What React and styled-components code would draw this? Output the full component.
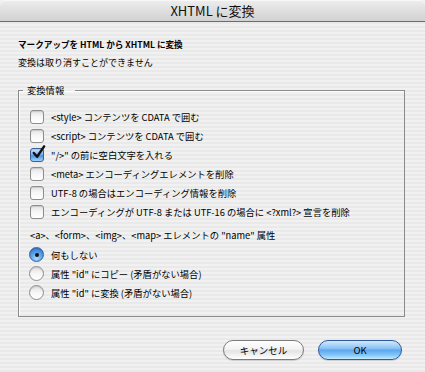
import React from "react";
import styled, { createGlobalStyle } from "styled-components";

const GlobalStyle = createGlobalStyle`
  html, body {
    margin: 0;
    padding: 0;
  }
  body {
    font-family: "Noto Sans CJK JP", "DejaVu Sans", sans-serif;
    font-size: 9.3px;
    color: #000;
    text-autospace: no-autospace;
  }
`;

const checks = [
  { label: "<style> コンテンツを CDATA で囲む", checked: false },
  { label: "<script> コンテンツを CDATA で囲む", checked: false },
  { label: "\"/>\" の前に空白文字を入れる", checked: true },
  { label: "<meta> エンコーディングエレメントを削除", checked: false },
  { label: "UTF-8 の場合はエンコーディング情報を削除", checked: false },
  {
    label: "エンコーディングが UTF-8 または UTF-16 の場合に <?xml?> 宣言を削除",
    checked: false,
  },
];

const radios = [
  { label: "何もしない", selected: true },
  { label: "属性 \"id\" にコピー (矛盾がない場合)", selected: false },
  { label: "属性 \"id\" に変換 (矛盾がない場合)", selected: false },
];

export default function App() {
  return (
    <>
      <GlobalStyle />
      <S.Window>
        <S.TitleBar>XHTML に変換</S.TitleBar>
        <S.Body>
          <S.Heading>マークアップを HTML から XHTML に変換</S.Heading>
          <S.Note>変換は取り消すことができません</S.Note>

          <S.Group>
            <S.Legend>変換情報</S.Legend>
            <S.GroupInner>
              {checks.map((c) => (
                <S.Row key={c.label}>
                  <Checkbox checked={c.checked} />
                  <span>{c.label}</span>
                </S.Row>
              ))}

              <S.SubLabel>
                &lt;a&gt;、&lt;form&gt;、&lt;img&gt;、&lt;map&gt; エレメントの "name" 属性
              </S.SubLabel>

              {radios.map((r) => (
                <S.Row key={r.label}>
                  <S.Radio $selected={r.selected} />
                  <span>{r.label}</span>
                </S.Row>
              ))}
            </S.GroupInner>
          </S.Group>

          <S.Buttons>
            <S.Button>キャンセル</S.Button>
            <S.Button $primary>OK</S.Button>
          </S.Buttons>
        </S.Body>
      </S.Window>
    </>
  );
}

const Checkbox = ({ checked }) => (
  <S.Box $checked={checked}>
    {checked && (
      <S.Tick viewBox="0 0 16 16">
        <path
          d="M3 8.5 L6.5 12.5 L14 1.5"
          fill="none"
          stroke="#111"
          strokeWidth="2.6"
          strokeLinecap="round"
          strokeLinejoin="round"
        />
      </S.Tick>
    )}
  </S.Box>
);

const S = {
  Window: styled.div`
    width: 425px;
    height: 372px;
    display: flex;
    flex-direction: column;
    overflow: hidden;
    background: repeating-linear-gradient(
      to bottom,
      #f1f1f1 0px,
      #f1f1f1 2px,
      #e9e9e9 2px,
      #e9e9e9 4px
    );
  `,
  TitleBar: styled.div`
    height: 21px;
    flex: none;
    display: flex;
    align-items: center;
    justify-content: center;
    font-size: 13px;
    color: #111;
    border-top-left-radius: 5px;
    border-top-right-radius: 5px;
    border-bottom: 1px solid #6c6c6c;
    background: linear-gradient(to bottom, #eeeeee 0%, #e0e0e0 45%, #d2d2d2 100%);
    box-shadow: inset 0 1px 0 #f8f8f8;
  `,
  Body: styled.div`
    display: flex;
    flex-direction: column;
    padding: 15px 20px 0 18px;
  `,
  Heading: styled.div`
    font-size: 8.6px;
    font-weight: bold;
    line-height: 14px;
  `,
  Note: styled.div`
    font-size: 9px;
    line-height: 14px;
    margin-top: 5px;
  `,
  Group: styled.fieldset`
    margin: 13px 0 0 0;
    padding: 0;
    border: 1px solid #8a8a8a;
    box-shadow: inset 1px 1px 0 #fdfdfd;
    min-width: 0;
  `,
  Legend: styled.legend`
    margin-left: 4px;
    padding: 0 11px 0 4px;
    line-height: 14px;
  `,
  GroupInner: styled.div`
    display: flex;
    flex-direction: column;
    padding: 10px 0 14px 11px;
  `,
  Row: styled.div`
    display: flex;
    align-items: center;
    gap: 7px;
    height: 19px;
    white-space: nowrap;
  `,
  SubLabel: styled.div`
    height: 19px;
    line-height: 19px;
    margin-top: 5px;
  `,
  Box: styled.span`
    position: relative;
    flex: none;
    width: 12px;
    height: 12px;
    border-radius: 3px;
    border: 1px solid ${(p) => (p.$checked ? "#3a5f97" : "#8d8d8d")};
    background: ${(p) =>
      p.$checked
        ? "linear-gradient(to bottom, #cfe6fb 0%, #7fb7ee 45%, #4a93e2 55%, #9fd3fb 100%)"
        : "linear-gradient(to bottom, #e2e2e2 0%, #f6f6f6 45%, #ffffff 100%)"};
    box-shadow: inset 0 1px 1px rgba(0, 0, 0, 0.12);
  `,
  Tick: styled.svg`
    position: absolute;
    left: 0px;
    top: -4px;
    width: 15px;
    height: 15px;
  `,
  Radio: styled.span`
    position: relative;
    flex: none;
    width: 13px;
    height: 13px;
    border-radius: 50%;
    border: 1px solid ${(p) => (p.$selected ? "#3a5f97" : "#8d8d8d")};
    background: ${(p) =>
      p.$selected
        ? "radial-gradient(circle at 50% 80%, #a9dcff 0%, #5aa2ea 45%, #2f6fcf 100%)"
        : "linear-gradient(to bottom, #e0e0e0 0%, #f6f6f6 50%, #ffffff 100%)"};
    box-shadow: inset 0 1px 1px rgba(0, 0, 0, 0.12);
    margin-left: -1px;

    &::after {
      content: "";
      display: ${(p) => (p.$selected ? "block" : "none")};
      position: absolute;
      left: 4.5px;
      top: 4.5px;
      width: 4px;
      height: 4px;
      border-radius: 50%;
      background: #111;
    }
  `,
  Buttons: styled.div`
    display: flex;
    justify-content: flex-end;
    gap: 14px;
    margin-top: 23px;
    padding-right: 3px;
  `,
  Button: styled.button`
    font-family: inherit;
    font-size: 9.5px;
    color: #000;
    height: 20px;
    width: ${(p) => (p.$primary ? "84px" : "81px")};
    padding: 0;
    border-radius: 10px;
    border: 1px solid ${(p) => (p.$primary ? "#2e5a9c" : "#7b7b7b")};
    background: ${(p) =>
      p.$primary
        ? "linear-gradient(to bottom, #d3e9fd 0%, #8cc3f3 40%, #5ea7ee 52%, #87c8fb 80%, #c6ecff 100%)"
        : "linear-gradient(to bottom, #ffffff 0%, #f3f3f3 45%, #e3e3e3 55%, #f6f6f6 85%, #ffffff 100%)"};
    box-shadow: 0 1px 1px rgba(0, 0, 0, 0.15);
  `,
};
